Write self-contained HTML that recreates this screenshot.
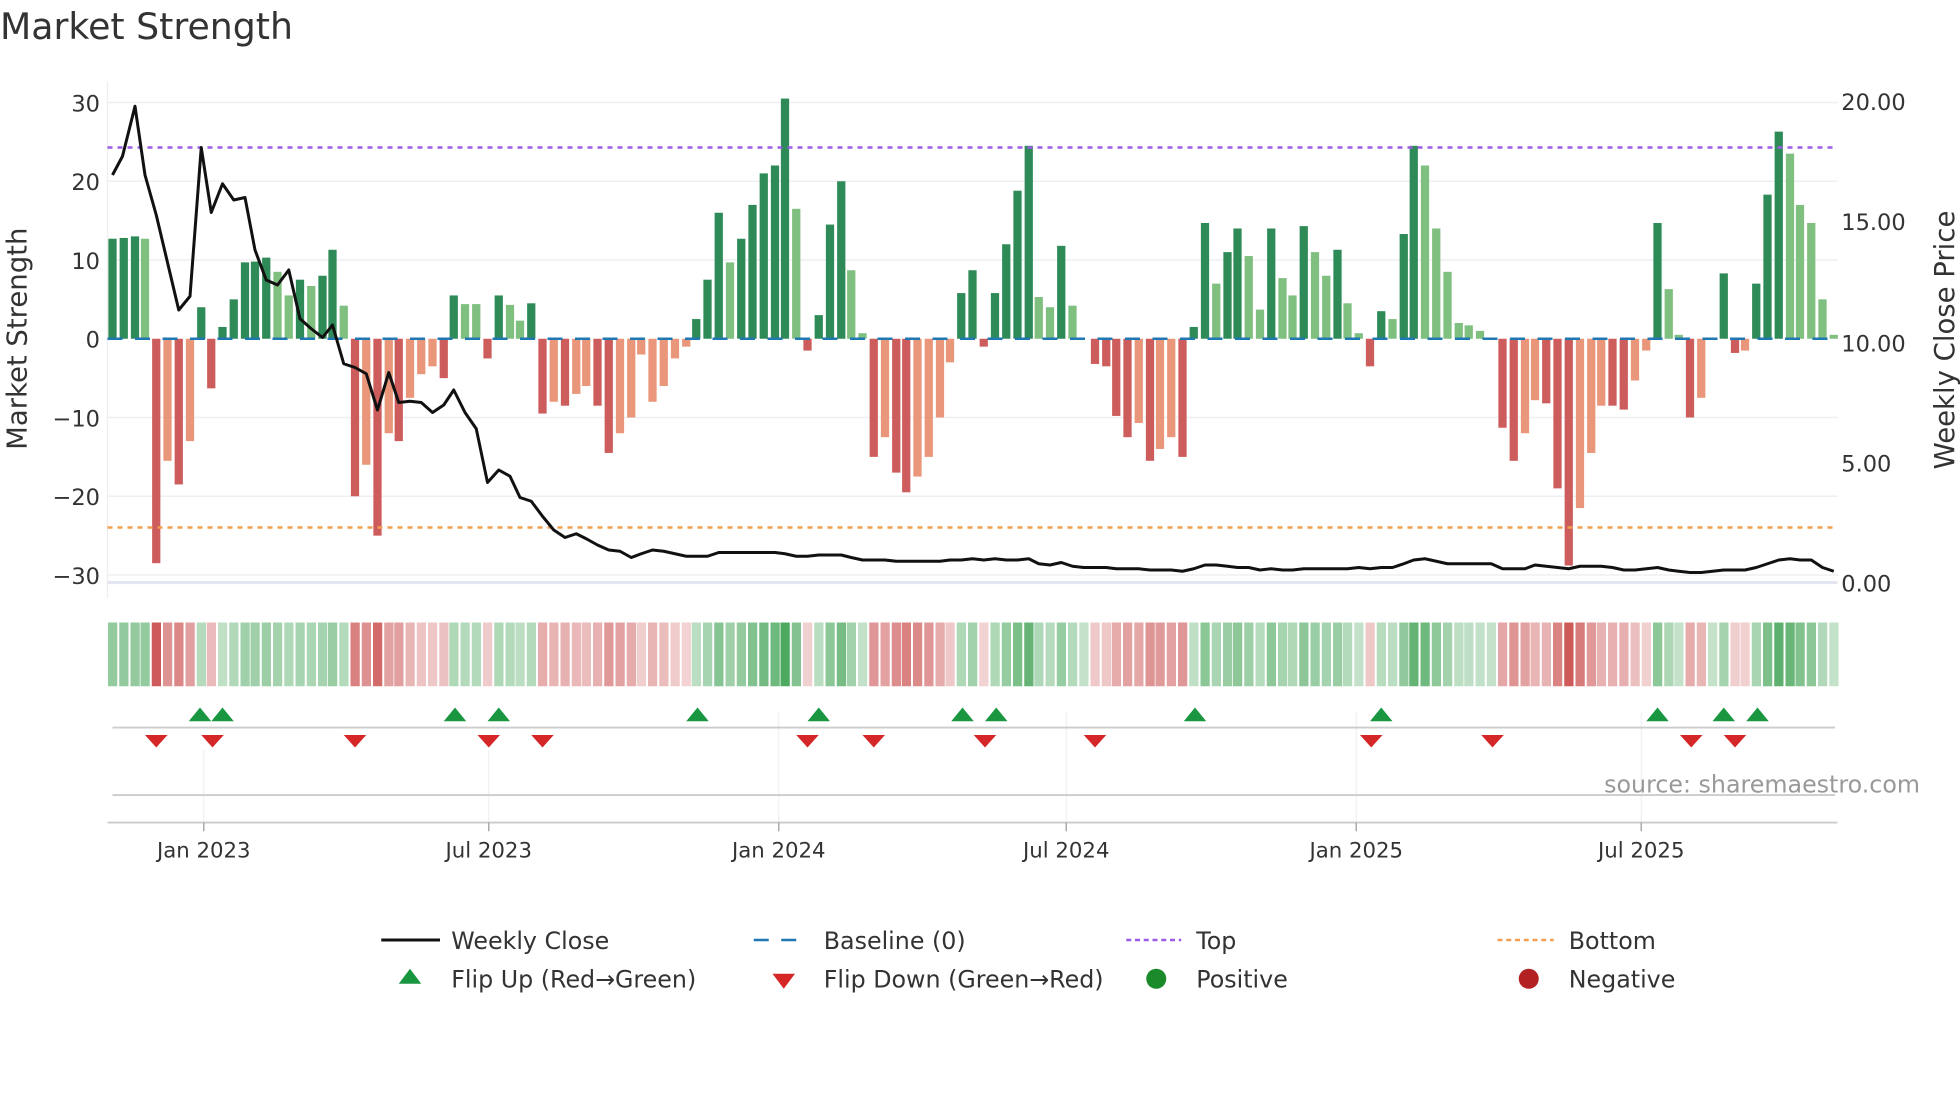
<!DOCTYPE html>
<html><head><meta charset="utf-8"><style>
html,body{margin:0;padding:0;background:#fff;}
svg{display:block;font-family:"DejaVu Sans","Liberation Sans",sans-serif;}
</style></head><body>
<svg id="s" width="1960" height="1102" viewBox="0 0 1568 881.6" xmlns="http://www.w3.org/2000/svg">
<rect width="1568" height="882" fill="#fff"/>
<text x="0" y="31" font-size="29" fill="#333">Market Strength</text>
<g stroke="#eeeff2" stroke-width="1.2">
<line x1="86" x2="1470" y1="82" y2="82"/><line x1="86" x2="1470" y1="145" y2="145"/><line x1="86" x2="1470" y1="208" y2="208"/><line x1="86" x2="1470" y1="334" y2="334"/><line x1="86" x2="1470" y1="397" y2="397"/><line x1="86" x2="1470" y1="460" y2="460"/>
</g>
<line x1="86" x2="86" y1="65" y2="478" stroke="#eee"/>
<line x1="86" x2="1470" y1="466" y2="466" stroke="#e3e6ef" stroke-width="2.5"/>
<g id="bars"></g>
<line x1="86" x2="1470" y1="271" y2="271" stroke="#1f77b4" stroke-width="2" stroke-dasharray="12 10"/>
<line x1="86" x2="1470" y1="118" y2="118" stroke="#9b5de5" stroke-width="2" stroke-dasharray="4 4"/>
<line x1="86" x2="1470" y1="422" y2="422" stroke="#f0a050" stroke-width="2" stroke-dasharray="4 4"/>
<polyline id="price" fill="none" stroke="#111" stroke-width="2.4" stroke-linejoin="round"/>
<g font-size="18" fill="#333" text-anchor="end">
<text x="80" y="89">30</text><text x="80" y="152">20</text><text x="80" y="215">10</text><text x="80" y="278">0</text><text x="80" y="341">−10</text><text x="80" y="404">−20</text><text x="80" y="467">−30</text>
</g>
<g font-size="18" fill="#333">
<text x="1473" y="88">20.00</text><text x="1473" y="184">15.00</text><text x="1473" y="281">10.00</text><text x="1473" y="377">5.00</text><text x="1473" y="473">0.00</text>
</g>
<text transform="translate(21,271) rotate(-90)" font-size="22" fill="#333" text-anchor="middle">Market Strength</text>
<text transform="translate(1563,272) rotate(-90)" font-size="22" fill="#333" text-anchor="middle">Weekly Close Price</text>
<g id="heat"></g>
<g stroke="#eef0f5" stroke-width="1">
<line x1="163" x2="163" y1="600" y2="658"/><line x1="391" x2="391" y1="600" y2="658"/><line x1="623" x2="623" y1="570" y2="658"/><line x1="853" x2="853" y1="570" y2="658"/><line x1="1085" x2="1085" y1="570" y2="658"/><line x1="1313" x2="1313" y1="570" y2="658"/>
</g>
<line x1="90" x2="1468" y1="582" y2="582" stroke="#ccc" stroke-width="1.5"/>
<line x1="90" x2="1468" y1="636" y2="636" stroke="#ccc" stroke-width="1.5"/>
<line x1="86" x2="1470" y1="658" y2="658" stroke="#ccc" stroke-width="1.5"/>
<g stroke="#aaa" stroke-width="1.2">
<line x1="163" x2="163" y1="658" y2="665"/><line x1="391" x2="391" y1="658" y2="665"/><line x1="623" x2="623" y1="658" y2="665"/><line x1="853" x2="853" y1="658" y2="665"/><line x1="1085" x2="1085" y1="658" y2="665"/><line x1="1313" x2="1313" y1="658" y2="665"/>
</g>
<g id="marks"></g>
<text x="1536" y="634" font-size="19" fill="#999" text-anchor="end">source: sharemaestro.com</text>
<g font-size="17" fill="#333" text-anchor="middle">
<text x="163" y="686">Jan 2023</text><text x="391" y="686">Jul 2023</text><text x="623" y="686">Jan 2024</text><text x="853" y="686">Jul 2024</text><text x="1085" y="686">Jan 2025</text><text x="1313" y="686">Jul 2025</text>
</g>
<g font-size="19" fill="#333">
<line x1="305" x2="352" y1="752" y2="752" stroke="#111" stroke-width="2.4"/><text x="361" y="759">Weekly Close</text>
<line x1="603" x2="647" y1="752" y2="752" stroke="#1f77b4" stroke-width="2" stroke-dasharray="12 10"/><text x="659" y="759">Baseline (0)</text>
<line x1="901" x2="945" y1="752" y2="752" stroke="#9b5de5" stroke-width="2" stroke-dasharray="4 3"/><text x="957" y="759">Top</text>
<line x1="1198" x2="1243" y1="752" y2="752" stroke="#f0a050" stroke-width="2" stroke-dasharray="4 3"/><text x="1255" y="759">Bottom</text>
<polygon points="319,787 337,787 328,775" fill="#1a9641"/><text x="361" y="790">Flip Up (Red→Green)</text>
<polygon points="618,779 636,779 627,791" fill="#d62728"/><text x="659" y="790">Flip Down (Green→Red)</text>
<circle cx="925" cy="783" r="8" fill="#1a8a2a"/><text x="957" y="790">Positive</text>
<circle cx="1223" cy="783" r="8" fill="#b22222"/><text x="1255" y="790">Negative</text>
</g>
</svg>
<script>
var B=[[90,12.7,'d'],[99,12.8,'d'],[108,13,'d'],[116,12.7,'l'],[125,-28.5,'d'],[134,-15.5,'l'],[143,-18.5,'d'],[152,-13,'l'],[161,4,'d'],[169,-6.3,'d'],[178,1.5,'d'],[187,5,'d'],[196,9.7,'d'],[204,9.8,'d'],[213,10.3,'d'],[222,8.5,'l'],[231,5.5,'l'],[240,7.5,'d'],[249,6.7,'l'],[258,8,'d'],[266,11.3,'d'],[275,4.2,'l'],[284,-20,'d'],[293,-16,'l'],[302,-25,'d'],[311,-12,'l'],[319,-13,'d'],[328,-7.5,'l'],[337,-4.5,'l'],[346,-3.5,'l'],[355,-5,'d'],[363,5.5,'d'],[372,4.4,'l'],[381,4.4,'l'],[390,-2.5,'d'],[399,5.5,'d'],[408,4.3,'l'],[416,2.3,'l'],[425,4.5,'d'],[434,-9.5,'d'],[443,-8,'l'],[452,-8.5,'d'],[461,-7,'l'],[469,-6,'l'],[478,-8.5,'d'],[487,-14.5,'d'],[496,-12,'l'],[505,-10,'l'],[513,-2,'l'],[522,-8,'l'],[531,-6,'l'],[540,-2.5,'l'],[549,-1,'l'],[557,2.5,'d'],[566,7.5,'d'],[575,16,'d'],[584,9.7,'l'],[593,12.7,'d'],[602,17,'d'],[611,21,'d'],[620,22,'d'],[628,30.5,'d'],[637,16.5,'l'],[646,-1.5,'d'],[655,3,'d'],[664,14.5,'d'],[673,20,'d'],[681,8.7,'l'],[690,0.7,'l'],[699,-15,'d'],[708,-12.5,'l'],[717,-17,'d'],[725,-19.5,'d'],[734,-17.5,'l'],[743,-15,'l'],[752,-10,'l'],[760,-3,'l'],[769,5.8,'d'],[778,8.7,'d'],[787,-1,'d'],[796,5.8,'d'],[805,12,'d'],[814,18.8,'d'],[823,24.5,'d'],[831,5.3,'l'],[840,4,'l'],[849,11.8,'d'],[858,4.2,'l'],[867,0,'l'],[876,-3.2,'d'],[885,-3.5,'d'],[893,-9.8,'d'],[902,-12.5,'d'],[911,-10.7,'l'],[920,-15.5,'d'],[928,-14,'l'],[937,-12.5,'l'],[946,-15,'d'],[955,1.5,'d'],[964,14.7,'d'],[973,7,'l'],[982,11,'d'],[990,14,'d'],[999,10.5,'l'],[1008,3.7,'l'],[1017,14,'d'],[1026,7.7,'l'],[1034,5.5,'l'],[1043,14.3,'d'],[1052,11,'l'],[1061,8,'l'],[1070,11.3,'d'],[1078,4.5,'l'],[1087,0.7,'l'],[1096,-3.5,'d'],[1105,3.5,'d'],[1114,2.5,'l'],[1123,13.3,'d'],[1131,24.5,'d'],[1140,22,'l'],[1149,14,'l'],[1158,8.5,'l'],[1167,2,'l'],[1175,1.7,'l'],[1184,1,'l'],[1193,0,'l'],[1202,-11.3,'d'],[1211,-15.5,'d'],[1220,-12,'l'],[1228,-7.8,'l'],[1237,-8.2,'d'],[1246,-19,'d'],[1255,-28.8,'d'],[1264,-21.5,'l'],[1273,-14.5,'l'],[1281,-8.5,'l'],[1290,-8.5,'d'],[1299,-9,'d'],[1308,-5.3,'l'],[1317,-1.5,'l'],[1326,14.7,'d'],[1335,6.3,'l'],[1343,0.5,'l'],[1352,-10,'d'],[1361,-7.5,'l'],[1370,0,'l'],[1379,8.3,'d'],[1388,-1.8,'d'],[1396,-1.5,'l'],[1405,7,'d'],[1414,18.3,'d'],[1423,26.3,'d'],[1432,23.5,'l'],[1440,17,'l'],[1449,14.7,'l'],[1458,5,'l'],[1467,0.5,'l']];
var NS="http://www.w3.org/2000/svg",bars=document.getElementById('bars'),heat=document.getElementById('heat');
function el(p,t,a){var e=document.createElementNS(NS,t);for(var k in a)e.setAttribute(k,a[k]);p.appendChild(e);return e;}
B.forEach(function(b){var x=b[0],v=b[1],y0=271,y1=271-6.3*v;
 var c=v>=0?(b[2]=='d'?'#2e8b57':'#7fbf7f'):(b[2]=='d'?'#cd5c5c':'#e9967a');
 if(Math.abs(v)>0.2)el(bars,'rect',{x:x-3.3,y:Math.min(y0,y1),width:6.6,height:Math.abs(y1-y0),fill:c});
 var hc=v>=0?'rgba(60,160,80,'+(0.3+Math.abs(v)/30*0.6)+')':'rgba(200,70,70,'+(0.22+Math.abs(v)/30*0.7)+')';
 el(heat,'rect',{x:x-3.6,y:498,width:7.4,height:51,fill:hc});
});
var P=[[90,140],[98,125],[108,85],[116,140],[125,172],[134,210],[143,248],[152,237],[161,118],[169,170],[178,147],[187,160],[196,158],[204,200],[213,224],[222,228],[231,216],[240,255],[249,263],[258,270],[266,260],[275,291],[284,294],[293,299],[302,328],[311,298],[319,322],[328,321],[337,322],[346,330],[355,324],[363,312],[372,330],[381,343],[390,386],[399,376],[408,381],[416,398],[425,401],[434,413],[443,424],[452,430],[461,427],[469,431],[478,436],[487,440],[496,441],[505,446],[513,443],[522,440],[531,441],[540,443],[549,445],[557,445],[566,445],[575,442],[584,442],[593,442],[602,442],[611,442],[620,442],[628,443],[637,445],[646,445],[655,444],[664,444],[673,444],[681,446],[690,448],[699,448],[708,448],[717,449],[725,449],[734,449],[743,449],[752,449],[760,448],[769,448],[778,447],[787,448],[796,447],[805,448],[814,448],[823,447],[831,451],[840,452],[849,450],[858,453],[867,454],[876,454],[885,454],[893,455],[902,455],[911,455],[920,456],[928,456],[937,456],[946,457],[955,455],[964,452],[973,452],[982,453],[990,454],[999,454],[1008,456],[1017,455],[1026,456],[1034,456],[1043,455],[1052,455],[1061,455],[1070,455],[1078,455],[1087,454],[1096,455],[1105,454],[1114,454],[1123,451],[1131,448],[1140,447],[1149,449],[1158,451],[1167,451],[1175,451],[1184,451],[1193,451],[1202,455],[1211,455],[1220,455],[1228,452],[1237,453],[1246,454],[1255,455],[1264,453],[1273,453],[1281,453],[1290,454],[1299,456],[1308,456],[1317,455],[1326,454],[1335,456],[1343,457],[1352,458],[1361,458],[1370,457],[1379,456],[1388,456],[1396,456],[1405,454],[1414,451],[1423,448],[1432,447],[1440,448],[1449,448],[1458,454],[1467,457]];
document.getElementById('price').setAttribute('points',P.map(function(p){return p.join(',')}).join(' '));
var m=document.getElementById('marks');
[160,178,364,399,558,655,770,797,956,1105,1326,1379,1406].forEach(function(x){el(m,'polygon',{points:(x-9)+',577 '+(x+9)+',577 '+x+',566',fill:'#1a9641'});});
[125,170,284,391,434,646,699,788,876,1097,1194,1353,1388].forEach(function(x){el(m,'polygon',{points:(x-9)+',588 '+(x+9)+',588 '+x+',598',fill:'#d62728'});});
</script>
</body></html>
